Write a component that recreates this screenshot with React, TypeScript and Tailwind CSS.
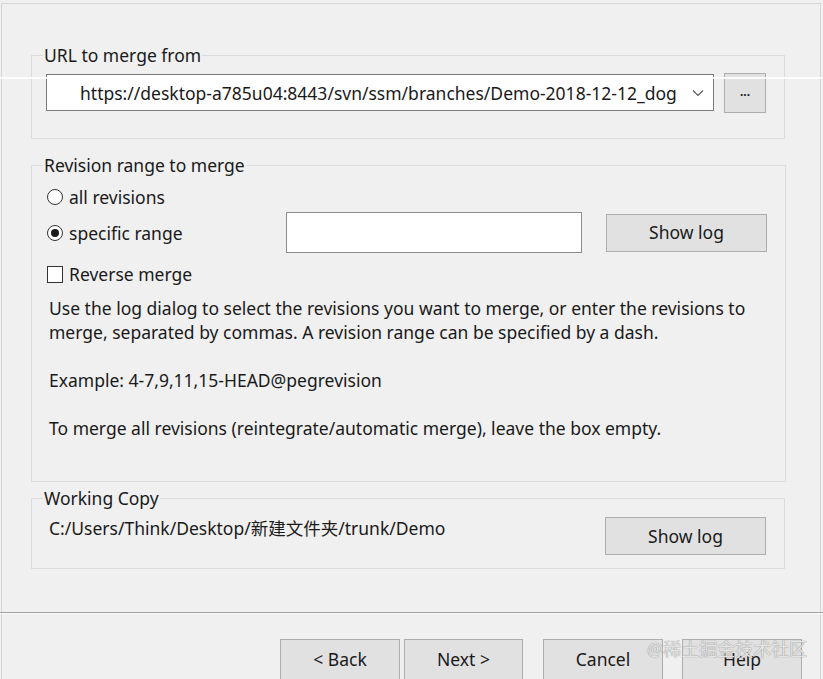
import React from "react";

const font = { fontFamily: "'Noto Sans','Noto Sans CJK SC',sans-serif" };

function Btn({ children, className = "" }: { children: React.ReactNode; className?: string }) {
  return (
    <div
      className={
        "flex items-center justify-center bg-[#e1e1e1] border border-[#adadad] text-[17.5px] text-[#1a1a1a] " +
        className
      }
    >
      {children}
    </div>
  );
}

function Radio({ checked }: { checked?: boolean }) {
  return (
    <div className="w-[16px] h-[16px] rounded-full border border-[#333] bg-white flex items-center justify-center shrink-0">
      {checked && <div className="w-[8px] h-[8px] rounded-full bg-[#1a1a1a]" />}
    </div>
  );
}

export default function App() {
  return (
    <div
      className="relative w-[823px] h-[679px] overflow-hidden bg-[#f0f0f0] text-[17.5px] text-[#1a1a1a]"
      style={font}
    >
      <div className="ml-[1px] pt-[3px]">
        <div className="w-[820px] h-[609px] border-l border-t border-r border-[#d6d6d6] pl-[29px] pt-[41px]">
          {/* URL to merge from */}
          <fieldset className="w-[754px] border border-[#dcdcdc] px-[14px] pb-[25px]">
            <legend className="ml-[-3px] px-[1px] leading-[20px]">URL to merge from</legend>
            <div className="flex items-start mt-[8px]">
              <div className="mt-[1px] w-[668px] h-[37px] border border-[#7a7a7a] bg-white flex items-center pl-[33px] pr-[9px]">
                <span className="leading-[24px]">https://desktop-a785u04:8443/svn/ssm/branches/Demo-2018-12-12_dog</span>
                <svg className="ml-auto" width="12" height="8" viewBox="0 0 12 8">
                  <path d="M1 1.5 L6 6.5 L11 1.5" fill="none" stroke="#555" strokeWidth="1.1" />
                </svg>
              </div>
              <Btn className="ml-[10px] w-[42px] h-[40px] text-[12px] font-bold">
                <span className="mt-[-2px] text-[12px]">...</span>
              </Btn>
            </div>
          </fieldset>

          {/* Revision range */}
          <fieldset className="mt-[16px] w-[754px] border border-[#dcdcdc] pl-[15px] pr-[18px] pb-[41px]">
            <legend className="ml-[-4px] px-[1px] leading-[20px]">Revision range to merge</legend>
            <div className="mt-[11px] h-[22px] flex items-center gap-[6px]">
              <Radio />
              <span className="leading-[22px]">all revisions</span>
            </div>
            <div className="mt-[4px] h-[41px] flex items-center">
              <div className="w-[239px] flex items-center gap-[6px]">
                <Radio checked />
                <span className="leading-[22px]">specific range</span>
              </div>
              <div className="w-[296px] h-[41px] border border-[#8c8c8c] bg-white" />
              <Btn className="ml-[24px] w-[161px] h-[38px]">Show log</Btn>
            </div>
            <div className="mt-[10px] h-[22px] flex items-center gap-[6px]">
              <div className="w-[16px] h-[17px] border border-[#333] bg-white shrink-0" />
              <span className="leading-[22px]">Reverse merge</span>
            </div>
            <div className="mt-[11px] ml-[2px] leading-[24px]">
              <p>
                Use the log dialog to select the revisions you want to merge, or enter the revisions to
                <br />
                merge, separated by commas. A revision range can be specified by a dash.
              </p>
              <p className="mt-[24px]">Example: 4-7,9,11,15-HEAD@pegrevision</p>
              <p className="mt-[24px]">To merge all revisions (reintegrate/automatic merge), leave the box empty.</p>
            </div>
          </fieldset>

          {/* Working copy */}
          <fieldset className="mt-[6px] w-[754px] border border-[#dcdcdc] pl-[17px] pr-[18px] pb-[13px]">
            <legend className="ml-[-6px] px-[1px] leading-[20px]">Working Copy</legend>
            <div className="flex items-start justify-between">
              <span className="mt-[8px] leading-[24px]">C:/Users/Think/Desktop/新建文件夹/trunk/Demo</span>
              <Btn className="mt-[9px] w-[161px] h-[38px]">Show log</Btn>
            </div>
          </fieldset>
        </div>
      </div>

      {/* separator */}
      <div className="h-px w-full bg-[#a0a0a0]" />
      <div className="h-px w-full bg-[#fbfbfb]" />

      {/* bottom buttons */}
      <div className="ml-[1px] w-[820px] h-[80px] border-l border-r border-[#d6d6d6] pl-[278px] pt-[25px] flex items-start">
        <Btn className="w-[120px] h-[41px]">&lt; Back</Btn>
        <Btn className="ml-[4px] w-[119px] h-[41px]">Next &gt;</Btn>
        <Btn className="ml-[20px] w-[120px] h-[41px]">Cancel</Btn>
        <Btn className="ml-[19px] w-[120px] h-[41px]">Help</Btn>
      </div>

      {/* white scan line artifact */}
      <div className="absolute left-0 top-[77px] w-full h-[2px] bg-white/90" />

      {/* watermark */}
      <div
        className="absolute left-[647px] top-[637px] text-[18px] leading-[24px] text-[#e4e4e4] [text-shadow:0_0_1px_#6f6f6f]"
        style={font}
      >
        @稀土掘金技术社区
      </div>
    </div>
  );
}
